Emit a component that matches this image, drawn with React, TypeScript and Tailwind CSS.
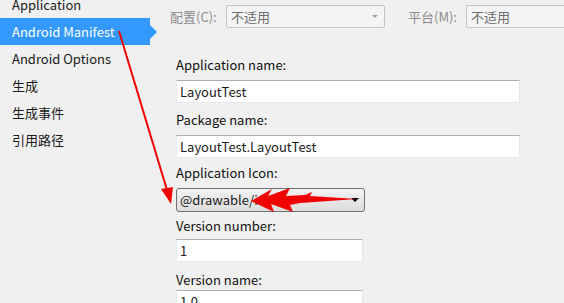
import React from 'react';

const navItems = ['Application', 'Android Manifest', 'Android Options', '生成', '生成事件', '引用路径'];

function Field({ label, value, width, labelClass, inputClass }: { label: string; value: string; width: string; labelClass: string; inputClass?: string }) {
  return (
    <div className="flex flex-col">
      <div className={`h-[20px] leading-[20px] text-[13px] text-[#111] ${labelClass}`}>{label}</div>
      <div
        className={`h-[23px] ${width} bg-white border border-[#e3e9ef] border-t-[#abadb3] flex items-center pl-[3px] text-[13px] text-[#1a1a1a] ${inputClass ?? ''}`}
      >
        {value}
      </div>
    </div>
  );
}

export default function App() {
  return (
    <div
      className="relative w-[564px] h-[303px] overflow-hidden bg-[#f0f0f0] flex"
      style={{ fontFamily: '"Noto Sans CJK SC", "Liberation Sans", sans-serif' }}
    >
      {/* Left navigation */}
      <div className="w-[157px] shrink-0 flex flex-col mt-[-9px]">
        {navItems.map((item) => {
          const selected = item === 'Android Manifest';
          return (
            <div key={item} className="relative h-[27px] flex items-center">
              <div
                className={`h-full w-[150px] flex items-center pl-[12px] text-[13px] ${selected ? 'bg-[#3399ff] text-white' : 'text-[#1a1a1a]'}`}
              >
                {item}
              </div>
              {selected && (
                <div className="w-0 h-0 border-y-[7px] border-y-transparent border-l-[7px] border-l-[#3399ff]" />
              )}
            </div>
          );
        })}
      </div>

      {/* Right panel */}
      <div className="flex-1 flex flex-col pl-[13px]">
        <div className="flex items-center h-[23px] mt-[5px] text-[13px] text-[#8d8d8d]">
          <span className="w-[56px]">配置(C):</span>
          <div className="h-[23px] w-[159px] border border-[#c5c5c5] rounded-[2px] bg-[#f4f4f4] flex items-center justify-between pl-[4px] pr-[6px] text-[#6d6d6d]">
            <span>不适用</span>
            <span className="w-0 h-0 border-x-[3px] border-x-transparent border-t-[3px] border-t-[#a0a0a0]" />
          </div>
          <span className="ml-[23px] w-[58px]">平台(M):</span>
          <div className="h-[23px] flex-1 border border-[#c5c5c5] border-r-0 rounded-l-[2px] bg-[#f4f4f4] flex items-center pl-[4px] text-[#6d6d6d]">
            不适用
          </div>
        </div>
        <div className="mt-[13px] h-px bg-[#a0a0a0] mr-0" />

        <div className="flex flex-col pl-[6px] mt-[14px]">
          <Field label="Application name:" value="LayoutTest" width="w-[344px]" labelClass="mb-[5px]" />
          <Field label="Package name:" value="LayoutTest.LayoutTest" width="w-[344px]" labelClass="mt-[7px] mb-[5px]" />

          <div className="h-[20px] leading-[20px] text-[13px] text-[#111] mt-[5px] mb-[5px]">Application Icon:</div>
          <div className="h-[24px] w-[189px] rounded-[3px] border border-[#707070] bg-gradient-to-b from-[#f2f2f2] to-[#dddddd] flex items-center justify-between pl-[3px] pr-[5px] text-[13px] text-[#1a1a1a]">
            <span>@drawable/icon</span>
            <span className="w-0 h-0 border-x-[4px] border-x-transparent border-t-[4px] border-t-black" />
          </div>

          <Field label="Version number:" value="1" width="w-[187px]" labelClass="mt-[4px] mb-[3px]" />
          <Field label="Version name:" value="1.0" width="w-[187px]" labelClass="mt-[8px] mb-0" />
        </div>
      </div>

      {/* Red annotation arrows */}
      <svg className="absolute inset-0 pointer-events-none" width="564" height="303" viewBox="0 0 564 303">
        <line x1="119" y1="31" x2="167" y2="190" stroke="#f00000" strokeWidth="2" />
        <path d="M171 204 L161 189 L173 187 Z" fill="#f00000" />
        <path
          d="M251 201 L272 189 L268 196 L290 188 L286 196 L305 195 L312 192 L310 196 L357 199 L300 203 L290 205 L293 212 L271 204 L274 212 Z"
          fill="#f00000"
        />
      </svg>
    </div>
  );
}
